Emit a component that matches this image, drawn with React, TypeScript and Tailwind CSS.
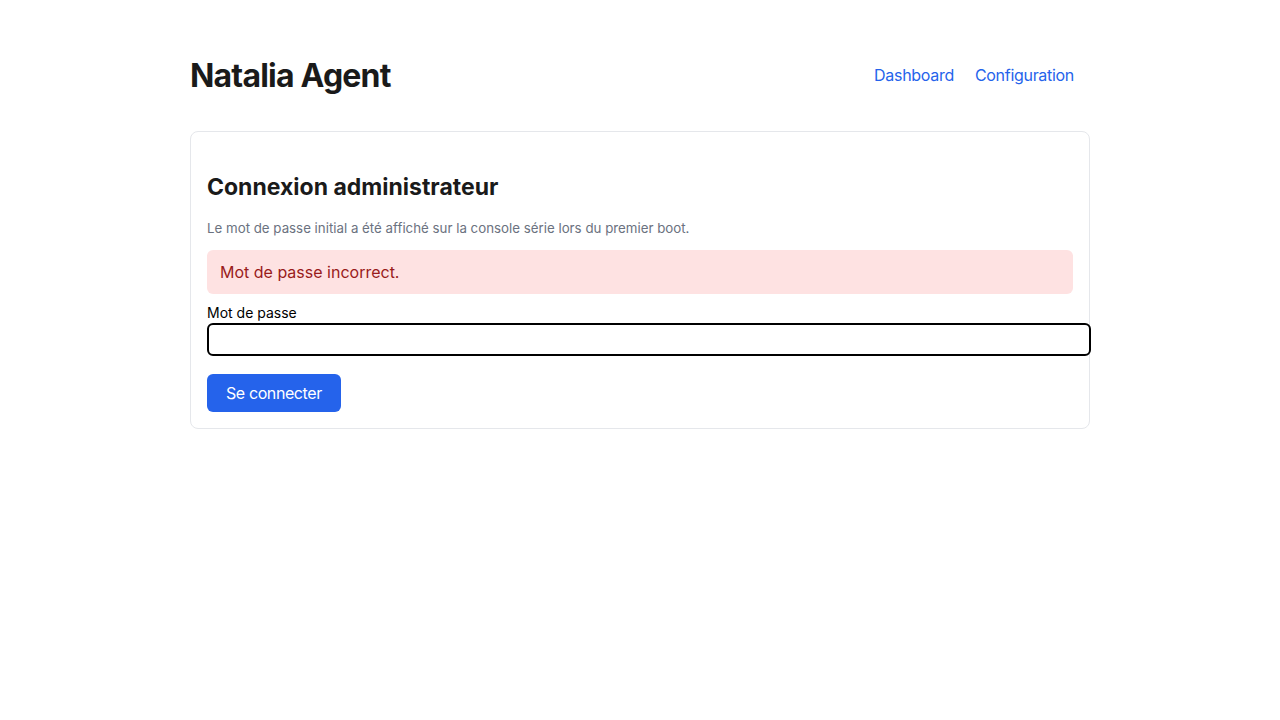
export default function App() {
  return (
    <div className="min-h-screen bg-white font-['Inter',sans-serif] text-[#1a1a1a]">
      <div className="mx-auto max-w-[900px] pt-[50px]">
        {/* Header */}
        <header className="flex items-center justify-between h-[50px]">
          <h1 className="text-[32px] font-bold tracking-[-0.8px] translate-y-px">Natalia Agent</h1>
          <nav className="flex gap-[21px] pr-4 text-base tracking-[-0.3px] text-[#2563eb]">
            <a href="#">Dashboard</a>
            <a href="#">Configuration</a>
          </nav>
        </header>

        {/* Login card */}
        <div className="mt-[31px] rounded-lg border border-[#e5e7eb] px-4 pt-10 pb-4">
          <h2 className="text-[23px] font-bold leading-[30px]">Connexion administrateur</h2>
          <p className="mt-[17px] text-[13.3px] text-[#6b7280]">
            Le mot de passe initial a été affiché sur la console série lors du premier boot.
          </p>
          <div className="mt-[11px] rounded-md bg-[#fee2e2] px-[13px] py-[11px] text-base leading-[22px] text-[#991b1b]">
            Mot de passe incorrect.
          </div>
          <form onSubmit={(e) => e.preventDefault()}>
            <label className="mt-[9px] block text-sm leading-5 text-black">Mot de passe</label>
            <input
              type="password"
              className="box-content block w-full h-[29px] px-[7px] rounded-md border-2 border-black outline-none"
            />
            <button
              type="submit"
              className="mt-[18px] h-[38px] rounded-md bg-[#2563eb] px-[19px] text-base tracking-[-0.4px] text-white"
            >
              Se connecter
            </button>
          </form>
        </div>
      </div>
    </div>
  );
}
